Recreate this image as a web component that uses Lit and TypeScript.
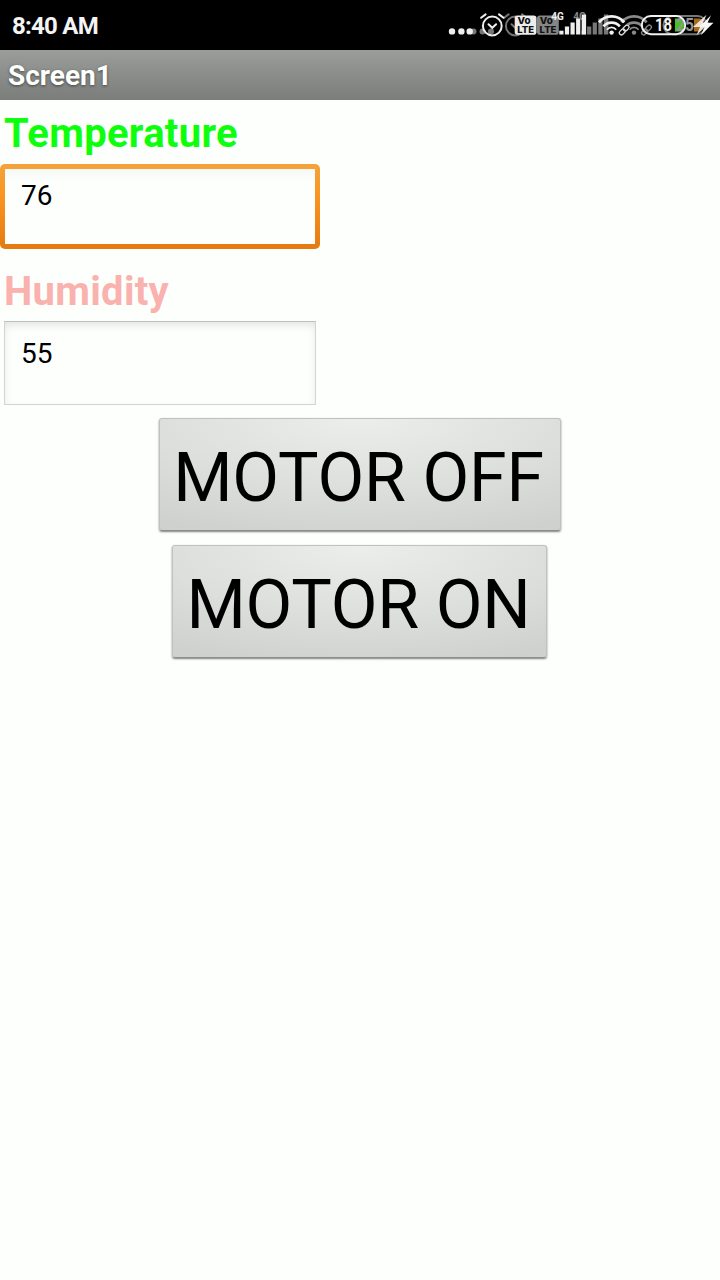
import { LitElement, html, css, svg } from "lit";
import { customElement, property } from "lit/decorators.js";

const alarm = (x: number, color: string) => svg`
  <g transform="translate(${x} 26)" fill="none" stroke=${color} stroke-width="2" stroke-linecap="round">
    <circle r="9.4"/>
    <path d="M-3.8 -1.8L0 1.8L3.8 -1.8" stroke-width="2"/>
    <path d="M-11.2 -8.2L-6.7 -11.6M11.2 -8.2L6.7 -11.6"/>
  </g>`;

const volte = (x: number, color: string) => svg`
  <g transform="translate(${x} 15.5)">
    <rect width="21.8" height="19.2" rx="2.8" fill=${color}/>
    <text x="2.8" y="8.8" class="vo" textLength="13" lengthAdjust="spacingAndGlyphs">Vo</text>
    <text x="2.6" y="17.6" class="vo" textLength="16.8" lengthAdjust="spacingAndGlyphs">LTE</text>
  </g>`;

const bars = (x: number, color: string) => svg`
  <g transform="translate(${x} 34.5)" fill=${color}>
    <rect x="0" y="-3.8" width="4.2" height="3.8"/>
    <rect x="5.6" y="-8" width="4.2" height="8"/>
    <rect x="11.2" y="-12" width="4.2" height="12"/>
    <rect x="16.8" y="-16" width="4.2" height="16"/>
    <rect x="22.4" y="-20" width="4.4" height="20"/>
  </g>`;

const wifi = (x: number, color: string) => svg`
  <g transform="translate(${x} 32.3)" fill="none" stroke=${color} stroke-width="2.8">
    <path d="M-12.6 -9.9A16.2 16.2 0 0 1 12.6 -9.9"/>
    <path d="M-8.2 -6A10.8 10.8 0 0 1 8.2 -6"/>
    <path d="M-4.6 -2.6A5.8 5.8 0 0 1 4.6 -2.6" stroke-width="1.8"/>
    <circle cy="0.3" r="2.2" fill=${color} stroke="none"/>
  </g>`;

const link = (x: number, color: string) => svg`
  <g transform="translate(${x} 30) rotate(-45)">
    <rect x="-6.6" y="-3.4" width="13.2" height="6.8" rx="3" fill="#000"/>
    <g fill="none" stroke=${color} stroke-width="1.3">
      <rect x="-6" y="-2.1" width="6.6" height="4.2" rx="2"/>
      <rect x="-0.6" y="-2.1" width="6.6" height="4.2" rx="2"/>
    </g>
  </g>`;

@customElement("status-bar")
export class StatusBar extends LitElement {
  static styles = css`
    :host { display: flex; justify-content: space-between; height: 50px; background: #000; color: #f4f4f4; }
    .time { padding-left: 12px; font: 700 24px/52px Roboto, sans-serif; letter-spacing: -0.75px; }
    .icons { display: block; }
    .vo { font: 800 9.6px Inter, sans-serif; fill: #111; }
    .net { font: 700 10px Roboto, sans-serif; }
    .level { font: 700 19px Roboto, sans-serif; }
  `;
  render() {
    return html`
      <div class="time">8:40 AM</div>
      <svg class="icons" width="280" height="50" viewBox="440 0 280 50">
        <g fill="#777"><circle cx="473.5" cy="31.4" r="3"/><circle cx="482.5" cy="31.4" r="3"/><circle cx="491" cy="31.4" r="3"/></g>
        <g fill="#eee"><circle cx="452" cy="31.4" r="3.2"/><circle cx="461.4" cy="31.4" r="3.2"/><circle cx="469.7" cy="31.4" r="3.2"/></g>
        ${alarm(515.3, "#747474")}
        ${alarm(492.3, "#eee")}
        ${volte(537, "#858585")}
        ${volte(514.7, "#ececec")}
        ${bars(581.5, "#777")}
        <text x="573.2" y="20.4" class="net" fill="#888">4G</text>
        ${bars(559.3, "#eee")}
        <text x="551.2" y="20.4" class="net" fill="#eee">4G</text>
        ${wifi(634, "#8a8a8a")}
        ${wifi(611.6, "#f2f2f2")}
        ${link(646.5, "#858585")}
        ${link(624.2, "#ddd")}
        <rect x="663.5" y="16" width="43" height="18.2" rx="9" fill="none" stroke="#777" stroke-width="2"/>
        <path d="M675 18.5H683L684.5 25L682 31.5H675Z" fill="#43c51c"/>
        <path d="M694 18.5H700Q703.5 20 703.5 25T700 31.5H694Z" fill="#a66a22"/>
        <text x="676" y="31.2" class="level" fill="#969696" textLength="18" lengthAdjust="spacingAndGlyphs">25</text>
        <rect x="641.8" y="16" width="43.4" height="18.2" rx="9" fill="none" stroke="#f2f2f2" stroke-width="2"/>
        <text x="655" y="31.4" class="level" fill="#f2f2f2" textLength="17" lengthAdjust="spacingAndGlyphs">18</text>
        <path d="M706.5 14.8L693 27H700L696.5 35.2L709 22.8H703Z" fill="#eee4d6"/>
        <path d="M711 15.2L699.5 26.8H704.5L701 35L713.5 22.8H707.5Z" fill="#f6f6f6"/>
      </svg>`;
  }
}

@customElement("text-box")
export class TextBox extends LitElement {
  @property() value = "";
  @property({ type: Boolean, reflect: true }) focused = false;
  static styles = css`
    :host { display: block; width: 320px; height: 84px; }
    .box {
      box-sizing: border-box; width: 312px; height: 84px; margin-left: 4px;
      padding: 15px 16px; border: 1px solid #d3d5d2; border-top-color: #bfc1be;
      background: #fdfffc; box-shadow: inset 0 4px 10px -2px rgba(0,0,0,.13);
      font: 400 28px/33px Roboto, sans-serif; color: #000;
    }
    :host([focused]) .box {
      width: 320px; height: 85px; margin-left: 0; padding: 15px 21px; border: 0; border-radius: 5px;
      background:
        linear-gradient(#f6f8f5, #fdfffc 12px) 5px 5px / 310px 75px no-repeat,
        linear-gradient(#f3a33b, #fa9420 40%, #e57a10);
      box-shadow: none;
    }
  `;
  render() {
    return html`<div class="box">${this.value}</div>`;
  }
}

@customElement("app-root")
export class AppRoot extends LitElement {
  static styles = css`
    :host { display: block; height: 1280px; background: #fdfffc; font-family: Roboto, sans-serif; overflow: hidden; }
    .title {
      box-sizing: border-box; height: 50px; padding-left: 8px;
      background: linear-gradient(#9b9d9a, #7b7d7a); color: #fdfffc;
      font-size: 28px; line-height: 51px; font-weight: 700; text-shadow: 0 1px 3px rgba(0,0,0,.5);
    }
    .form { display: flex; flex-direction: column; padding-top: 10px; }
    .label { padding-left: 4px; font-size: 40px; line-height: 47px; font-weight: 700; letter-spacing: 0.3px; }
    .temp { color: #0dff0d; margin-bottom: 7px; }
    .hum { color: #f9b2ae; margin: 20px 0 6px; }
    .actions { display: flex; flex-direction: column; align-items: center; gap: 14px; padding: 13px 1px 0 0; }
    .btn {
      box-sizing: border-box; width: 402px; height: 113px; padding: 3px 2px 0 0; border: 1px solid #c0c2bf;
      border-bottom-color: #8c8e8b; border-radius: 3px; color: #000;
      background: radial-gradient(ellipse 90% 110% at 50% 0, #eceeeb, #dcdedb 60%, #cfd1ce);
      box-shadow: 0 1px 2px rgba(0,0,0,.5);
      font: 400 68px/113px Roboto, sans-serif; letter-spacing: -0.2px; white-space: nowrap;
    }
    .on { width: 375px; }
  `;
  render() {
    return html`
      <status-bar></status-bar>
      <div class="title">Screen1</div>
      <div class="form">
        <div class="label temp">Temperature</div>
        <text-box value="76" focused></text-box>
        <div class="label hum">Humidity</div>
        <text-box value="55"></text-box>
        <div class="actions">
          <button class="btn">MOTOR OFF</button>
          <button class="btn on">MOTOR ON</button>
        </div>
      </div>`;
  }
}
